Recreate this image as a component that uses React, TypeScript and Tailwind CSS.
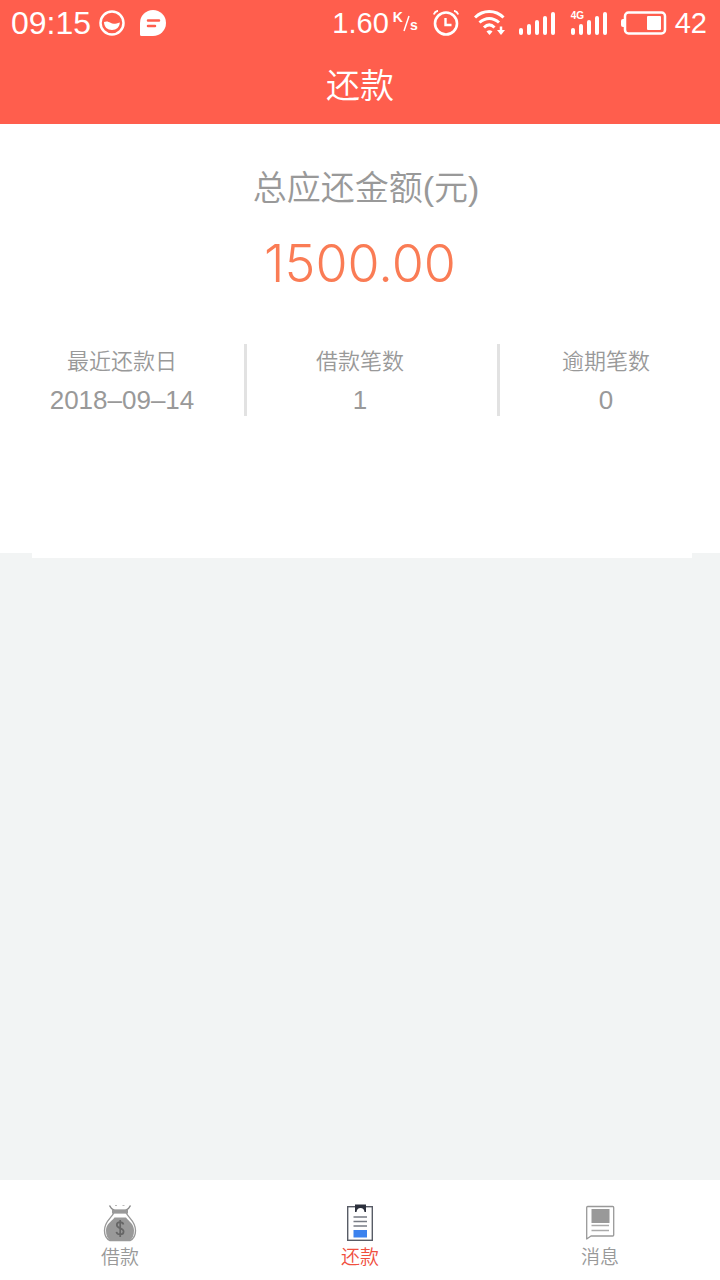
import React from 'react';

const fontStack = "font-['Liberation_Sans','Noto_Sans_CJK_SC',sans-serif]";

function SignalBars() {
  return (
    <svg viewBox="0 0 38 24" className="w-[38px] h-6" fill="currentColor" aria-hidden="true">
      <rect x="0" y="17" width="4" height="7" rx="2" />
      <rect x="8" y="13" width="4" height="11" rx="2" />
      <rect x="16" y="9" width="4" height="15" rx="2" />
      <rect x="24" y="5" width="4" height="19" rx="2" />
      <rect x="32" y="1" width="4" height="23" rx="2" />
    </svg>
  );
}

function StatusBar() {
  return (
    <div className="flex items-center justify-between h-[46px] pl-[11px] pr-[13px]">
      <div className="flex items-center">
        <span className="text-[32px] leading-none">09:15</span>
        <svg viewBox="0 0 26 26" className="w-[26px] h-[26px] ml-2" aria-hidden="true">
          <circle cx="13" cy="13" r="11.5" fill="none" stroke="currentColor" strokeWidth="2.5" />
          <path d="M5 12c2.500-1.200 4.500-.5 6.500.8S16.500 14 20.800 12.500c0 4.500-3.300 7.500-7.800 7.500s-8-3-8-8z" fill="currentColor" />
        </svg>
        <svg viewBox="0 0 26 26" className="w-[26px] h-[26px] ml-[15px]" aria-hidden="true">
          <path d="M13 0a13 13 0 1 1 0 26H1.500A1.500 1.500 0 0 1 0 24.500V13A13 13 0 0 1 13 0z" fill="currentColor" />
          <path d="M8 10.500h11M8 16h7" stroke="#ff5e4d" strokeWidth="2.500" strokeLinecap="round" />
        </svg>
      </div>

      <div className="flex items-center">
        <span className="text-[29px] leading-none">1.60</span>
        <span className="flex ml-1 text-sm leading-none font-bold">
          <span className="-mt-1">K</span>
          <svg viewBox="0 0 7 18" className="w-[7px] h-[18px]" aria-hidden="true">
            <path d="M1 17 6 2" stroke="currentColor" strokeWidth="1.500" />
          </svg>
          <span className="mt-1">s</span>
        </span>
        <svg viewBox="0 0 26 26" className="w-[26px] h-[26px] ml-[15px]" fill="none" stroke="currentColor" aria-hidden="true">
          <circle cx="13" cy="13.500" r="11" strokeWidth="2.600" />
          <path d="M12.500 8v7h6" strokeWidth="2.400" />
          <path d="M.8 4.500C1.500 2.500 3 1 5 .8M25.200 4.500C24.500 2.500 23 1 21 .8" strokeWidth="1.800" />
        </svg>
        <svg viewBox="0 0 32 26" className="w-8 h-[26px] ml-[15px]" fill="none" stroke="currentColor" aria-hidden="true">
          <path d="M1 7.500C9-.5 21.500-.5 29.500 7.500" strokeWidth="3" />
          <path d="M5.500 12.500c6-5.500 13.500-5.500 19.500 0" strokeWidth="3" />
          <path d="M10 17.500c3.500-3.500 7-3.500 10.500 0" strokeWidth="3" />
          <path d="M12.500 21.500q3-2.500 6 0l-3 3.500z" fill="currentColor" stroke="none" />
          <path d="M27 16.500v4" strokeWidth="2.500" />
          <path d="M23 20h8l-4 5z" fill="currentColor" stroke="none" />
        </svg>
        <span className="ml-[13px]">
          <SignalBars />
        </span>
        <span className="relative ml-[14px]">
          <SignalBars />
          <span className="absolute left-0 top-0 text-[10px] leading-none font-bold">4G</span>
        </span>
        <svg viewBox="0 0 46 24" className="w-[46px] h-6 ml-3" aria-hidden="true">
          <rect x="4" y="1.500" width="40" height="21" rx="3.500" fill="none" stroke="currentColor" strokeWidth="2.500" />
          <path d="M3 8v8H2a2 2 0 0 1-2-2v-4a2 2 0 0 1 2-2z" fill="currentColor" />
          <rect x="26" y="5" width="14" height="14" rx="1" fill="currentColor" />
        </svg>
        <span className="ml-2 text-[29px] leading-none">42</span>
      </div>
    </div>
  );
}

function MoneyBagIcon() {
  return (
    <svg viewBox="0 0 36 40" className="w-9 h-10" aria-hidden="true">
      <path d="M7.500 1.500Q9 5 12.500 6.500h11Q27 5 28.500 1.500" fill="none" stroke="#888" strokeWidth="1.400" />
      <path d="M13 1.500h2M20.500 1.500h2" stroke="#bbb" strokeWidth="1.200" />
      <path d="M12 8.500C9 15 2.500 17 2.500 26.500c0 5 2 8.500 5.500 10h20c3.500-1.500 5.500-5 5.500-10C33.500 17 27 15 24 8.500z" fill="#fff" stroke="#999" strokeWidth="1.400" />
      <path d="M10 5.500h16v4H10z" fill="#999" />
      <path d="M12.500 13.500h11.500c3 4 8 6.500 8 13 0 5-1.500 8-4.500 10h-19c-3-2-4.500-5-4.500-10 0-6.500 5.500-9 8.500-13z" fill="#999" />
      <path d="M21.500 20.500c-.5-1.500-1.700-2.300-3.400-2.300-2 0-3.300 1.100-3.300 2.900 0 4 6.800 2.600 6.800 6.400 0 2-1.500 3-3.500 3s-3.300-.9-3.700-2.600M18.200 16v17" fill="none" stroke="#666" strokeWidth="1.700" />
    </svg>
  );
}

function ClipboardIcon() {
  return (
    <svg viewBox="0 0 36 40" className="w-9 h-10" aria-hidden="true">
      <rect x="5.700" y="2.700" width="24.600" height="33.600" fill="#fff" stroke="#585c66" strokeWidth="1.400" />
      <path d="M13 .500h11V8h-1.500Q22 4 18.500 4T14.500 8H13z" fill="#2c303c" />
      <path d="M11.500 13H25M11.500 17.500H25M11.500 22H25" stroke="#777b84" strokeWidth="1.500" />
      <rect x="11.500" y="26" width="13.500" height="7.500" fill="#3b82ee" />
    </svg>
  );
}

function MessageIcon() {
  return (
    <svg viewBox="0 0 36 40" className="w-9 h-10" aria-hidden="true">
      <path d="M4.700 35V3.500q0-1 1-1h25q1 0 1 1V31q0 1-1 1H9z" fill="#fff" stroke="#999" strokeWidth="1.300" strokeLinejoin="round" />
      <rect x="9.500" y="5" width="18" height="14" fill="#999" />
      <path d="M9.500 21.500H27M9.500 26.500H27" stroke="#aaa" strokeWidth="1.300" />
    </svg>
  );
}

const tabs = [
  { name: '借款', icon: MoneyBagIcon, active: false },
  { name: '还款', icon: ClipboardIcon, active: true },
  { name: '消息', icon: MessageIcon, active: false }
];

export default function App() {
  return (
    <div className={`flex flex-col min-h-screen bg-[#f2f4f4] font-[350] ${fontStack}`}>
      <header className="bg-[#ff5e4d] text-white">
        <StatusBar />
        <h1 className="h-[78px] text-center text-[34px] leading-20 font-[350]">还款</h1>
      </header>

      <main className="flex-1">
        <section className="bg-white pt-10 pb-[137px] text-[#999]">
          <h2 className="pl-3 text-center text-[34px] leading-12 font-[350]">总应还金额(元)</h2>
          <p className="mt-5 text-center font-[Inter,sans-serif] text-[52px] leading-16 text-[#fa7c55]">1500.00</p>
          <dl className="flex mt-12 text-center">
            <div className="w-[247px] border-r-3 border-[#e2e2e2]">
              <dt className="text-[22px] leading-9">最近还款日</dt>
              <dd className="pt-1 text-[26px] leading-8">2018–09–14</dd>
            </div>
            <div className="flex-1 pr-6 border-r-3 border-[#e2e2e2]">
              <dt className="text-[22px] leading-9">借款笔数</dt>
              <dd className="pt-1 text-[26px] leading-8">1</dd>
            </div>
            <div className="w-[220px] pr-2">
              <dt className="text-[22px] leading-9">逾期笔数</dt>
              <dd className="pt-1 text-[26px] leading-8">0</dd>
            </div>
          </dl>
        </section>
        <div className="h-[5px] ml-8 mr-7 bg-white" />
      </main>

      <nav className="flex h-[100px] bg-white">
        {tabs.map((tab) => (
          <button
            key={tab.name}
            className={`flex flex-1 flex-col items-center pt-6 text-[19px] leading-7 ${
              tab.active ? 'text-[#f0503f]' : 'text-[#999]'
            }`}
          >
            <tab.icon />
            {tab.name}
          </button>
        ))}
      </nav>
    </div>
  );
}
